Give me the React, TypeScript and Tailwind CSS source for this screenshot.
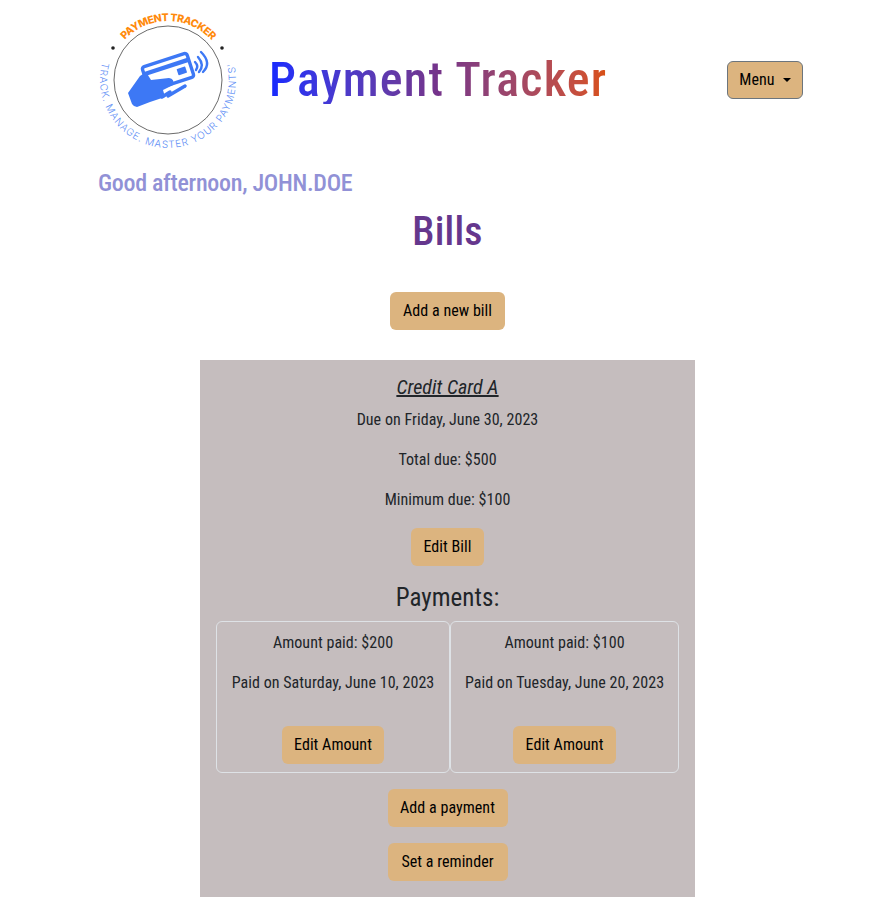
const FONT = "font-['Roboto',sans-serif] [font-stretch:75%] tracking-[0.05px]";

function Logo() {
  return (
    <svg width="160" height="160" viewBox="0 0 160 160" className="shrink-0">
      <defs>
        <path id="arcTop" d="M 19 80 A 59 59 0 0 1 137 80" />
        <path id="arcBottom" d="M12.3 62.4 A68 68 0 1 0 143.7 62.4" />
      </defs>
      <circle cx="78" cy="80" r="54" fill="none" stroke="#444" strokeWidth="0.8" />
      <circle cx="23" cy="48" r="1.8" fill="#222" />
      <circle cx="132" cy="48" r="1.8" fill="#222" />
      <text fontFamily="Inter, sans-serif" fontSize="10.5" fontWeight="800" fill="#ff8a0c">
        <textPath href="#arcTop" startOffset="44" textLength="98" lengthAdjust="spacing">PAYMENT TRACKER</textPath>
      </text>
      <text fontFamily="Inter, sans-serif" fontSize="10" fontWeight="300" fill="#5f8ff5">
        <textPath href="#arcBottom" textLength="248" lengthAdjust="spacing">TRACK. MANAGE. MASTER YOUR PAYMENTS'</textPath>
      </text>
      <g transform="rotate(-18 78 72)">
        <rect x="54.5" y="59.5" width="47" height="25" rx="2.5" fill="#fff" stroke="#3d78f5" strokeWidth="3.4" />
        <rect x="54.5" y="64.5" width="47" height="4.4" fill="#3d78f5" />
        <rect x="87" y="72" width="9" height="6.5" rx="0.6" fill="#3d78f5" />
      </g>
      <path d="M38 93 L50 76 L56 72 L61 80 L79 78 Q85 79 83 85 L73 90 L75 97 L60 102 L47 107 Q44 107 42 104 Z" fill="#3d78f5" />
      <g fill="none" stroke="#3d78f5" strokeLinecap="round">
        <path d="M78 96 L95 86" strokeWidth="3.4" />
        <path d="M72 97 L80 92" strokeWidth="3.4" />
        <path d="M105 62 Q109 66 106 70" strokeWidth="2.4" />
        <path d="M108 57 Q115 65 109 72" strokeWidth="2.4" />
        <path d="M111 52 Q122 63 113 72" strokeWidth="2.4" />
      </g>
    </svg>
  );
}

function Btn({ children, className = "" }: { children: React.ReactNode; className?: string }) {
  return (
    <button className={`h-[38px] px-[12.5px] rounded-md bg-[#dcb47f] text-black text-base leading-6 whitespace-nowrap ${className}`}>
      {children}
    </button>
  );
}

function Payment({ amount, date, className = "" }: { amount: string; date: string; className?: string }) {
  return (
    <div className={`flex flex-col items-center border border-[#dee2e6] rounded-md pt-[9px] h-[152px] ${className}`}>
      <p className="leading-6 mb-4">Amount paid: {amount}</p>
      <p className="leading-6 mb-[31px] whitespace-nowrap">Paid on {date}</p>
      <Btn>Edit Amount</Btn>
    </div>
  );
}

export default function App() {
  return (
    <div className={`${FONT} w-[895px] h-[907px] bg-white text-[#212529] text-base overflow-hidden`}>
      <header className="flex items-center h-[160px] pl-[90px]">
        <Logo />
        <h1 className="ml-[19px] text-[48px] font-medium leading-none tracking-[1.25px] text-transparent bg-clip-text bg-gradient-to-r from-[#1429ff] via-[#75338a] to-[#d9500f]">
          Payment Tracker
        </h1>
        <button className="ml-auto mr-[92px] h-[38px] w-[76px] rounded-md border border-[#6c757d] bg-[#dcb47f] text-black flex items-center justify-center gap-2">
          Menu
          <span className="w-0 h-0 border-x-[4.5px] border-x-transparent border-t-[4.5px] border-t-black" />
        </button>
      </header>
      <p className="pl-[98px] text-[24px] leading-[29px] mt-[9px] text-[#9191d6] font-medium tracking-[-0.3px]">Good afternoon, JOHN.DOE</p>
      <h2 className="text-center text-[40px] leading-[48px] mt-[10px] text-[#65378d] font-medium tracking-[0.2px]">Bills</h2>
      <div className="flex justify-center mt-[36px]">
        <Btn>Add a new bill</Btn>
      </div>
      <main className="w-[495px] h-[537px] mx-auto mt-[30px] bg-[#c5bdbe] flex flex-col items-center pt-[15px]">
        <a className="text-[20px] leading-6 italic underline">Credit Card A</a>
        <p className="leading-6 mt-[9px]">Due on Friday, June 30, 2023</p>
        <p className="leading-6 mt-4">Total due: $500</p>
        <p className="leading-6 mt-4">Minimum due: $100</p>
        <Btn className="mt-4">Edit Bill</Btn>
        <h3 className="text-[25px] leading-[30px] mt-[17px]">Payments:</h3>
        <div className="flex w-full pl-4 mt-2">
          <Payment amount="$200" date="Saturday, June 10, 2023" className="w-[234px]" />
          <Payment amount="$100" date="Tuesday, June 20, 2023" className="w-[229px]" />
        </div>
        <Btn className="mt-4 w-[120px]">Add a payment</Btn>
        <Btn className="mt-4 w-[120px]">Set a reminder</Btn>
      </main>
    </div>
  );
}
